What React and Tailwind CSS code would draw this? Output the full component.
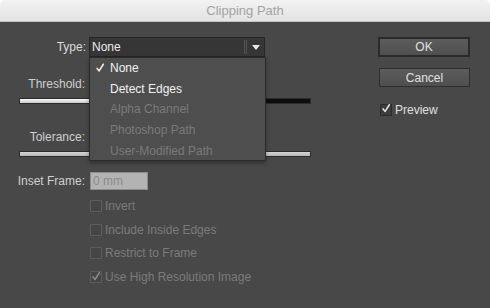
import React from 'react';

const font = { fontFamily: '"Liberation Sans", Arial, sans-serif' };

const Check = ({ className }) => (
  <svg viewBox="0 0 12 12" className={className} fill="none" stroke="currentColor" strokeWidth="1.8" strokeLinecap="round" strokeLinejoin="round">
    <path d="M2.5 6.5 L5 9.5 L10 1.5" />
  </svg>
);

const menuItems = [
  { label: 'None', checked: true, enabled: true },
  { label: 'Detect Edges', enabled: true },
  { label: 'Alpha Channel' },
  { label: 'Photoshop Path' },
  { label: 'User-Modified Path' },
];

const options = [
  { label: 'Invert' },
  { label: 'Include Inside Edges' },
  { label: 'Restrict to Frame' },
  { label: 'Use High Resolution Image', checked: true },
];

const App = () => {
  return (
    <div className="w-[490px] h-[308px] bg-white overflow-hidden relative" style={font}>
      {/* Title bar */}
      <div className="h-[22px] rounded-t-[5px] bg-gradient-to-b from-[#f2f2f2] to-[#e3e3e3] border-b border-[#c4c4c4] flex items-center justify-center">
        <span className="text-[13px] text-[#a3a3a3] leading-none">Clipping Path</span>
      </div>

      {/* Body */}
      <div className="h-[286px] bg-[#484848] flex">
        {/* Left column */}
        <div className="w-[340px] shrink-0 flex flex-col pt-[15px]">
          <div className="flex items-center h-[20px]">
            <div className="w-[89px] shrink-0 text-right text-[12px] text-[#dcdcdc] pr-[3px]">Type:</div>
            <div className="w-[176px] shrink-0 h-[20px] bg-[#363636] border border-[#262626] flex items-center pl-[2px]">
              <span className="flex-1 text-[12px] text-[#ececec]">None</span>
              <div className="h-[14px] w-[3px] border-l border-r border-[#555]" />
              <div className="w-[17px] flex justify-center">
                <div className="w-0 h-0 border-l-[4px] border-r-[4px] border-t-[5px] border-l-transparent border-r-transparent border-t-[#e8e8e8]" />
              </div>
            </div>
          </div>

          <div className="mt-[20px] w-[85px] text-right text-[12px] leading-[14px] text-[#cfcfcf]">Threshold:</div>
          <div className="mt-[7px] ml-[19px] w-[292px] h-[6px] border border-[#2c2c2c] flex">
            <div className="w-[70%] bg-gradient-to-b from-[#fafafa] to-[#c9c9c9]" />
            <div className="flex-1 bg-[#0e0e0e]" />
          </div>

          <div className="mt-[26px] w-[85px] text-right text-[12px] leading-[14px] text-[#cfcfcf]">Tolerance:</div>
          <div className="mt-[7px] ml-[19px] w-[292px] h-[6px] border border-[#2c2c2c] bg-gradient-to-b from-[#d6d6d6] to-[#b8b8b8]" />

          <div className="mt-[15px] flex items-center h-[18px]">
            <div className="w-[86px] shrink-0 text-right text-[12px] text-[#cfcfcf] pr-[1px]">Inset Frame:</div>
            <div className="ml-[4px] w-[58px] h-[18px] bg-[#b3b3b3] border border-[#8c8c8c] flex items-center pl-[2px]">
              <span className="text-[12px] text-[#8a8a8a]">0 mm</span>
            </div>
          </div>

          <div className="mt-[4px] flex flex-col">
            {options.map((o) => (
              <div key={o.label} className="h-[23.7px] flex items-center pl-[90px]">
                <div className="w-[12px] h-[12px] border border-[#5c5c5c] bg-[#454545] text-[#8c8c8c] flex items-center justify-center">
                  {o.checked && <Check className="w-[11px] h-[11px]" />}
                </div>
                <span className="ml-[3px] text-[12px] text-[#7b7b7b]">{o.label}</span>
              </div>
            ))}
          </div>
        </div>

        {/* Right column */}
        <div className="flex flex-col pt-[15px] pl-[38px]">
          <button className="w-[92px] h-[20px] bg-gradient-to-b from-[#5c5c5c] to-[#4f4f4f] border-2 border-[#2a2a2a] text-[12px] text-[#e2e2e2] leading-none">
            OK
          </button>
          <button className="mt-[11px] ml-[1px] w-[91px] h-[19px] bg-gradient-to-b from-[#5c5c5c] to-[#4f4f4f] border border-[#2e2e2e] text-[12px] text-[#e2e2e2] leading-none">
            Cancel
          </button>
          <div className="mt-[14px] ml-[2px] flex items-center">
            <div className="w-[12px] h-[12px] border border-[#2c2c2c] bg-[#3c3c3c] text-[#e6e6e6] flex items-center justify-center">
              <Check className="w-[11px] h-[11px] -mt-[3px]" />
            </div>
            <span className="ml-[3px] text-[12px] text-[#e0e0e0]">Preview</span>
          </div>
        </div>
      </div>

      {/* Open dropdown menu */}
      <div className="absolute left-[89px] top-[57px] w-[177px] h-[104px] bg-[#4e4e4e] border border-[#2c2c2c] shadow-[0_2px_4px_rgba(0,0,0,0.35)]">
        {menuItems.map((m) => (
          <div key={m.label} className="h-[20.6px] flex items-center">
            <div className="w-[20px] flex justify-center text-[#f0f0f0]">
              {m.checked && <Check className="w-[10px] h-[10px]" />}
            </div>
            <span className={`text-[12px] ${m.enabled ? 'text-[#f2f2f2]' : 'text-[#7a7a7a]'}`}>{m.label}</span>
          </div>
        ))}
      </div>
    </div>
  );
};

export default App;
